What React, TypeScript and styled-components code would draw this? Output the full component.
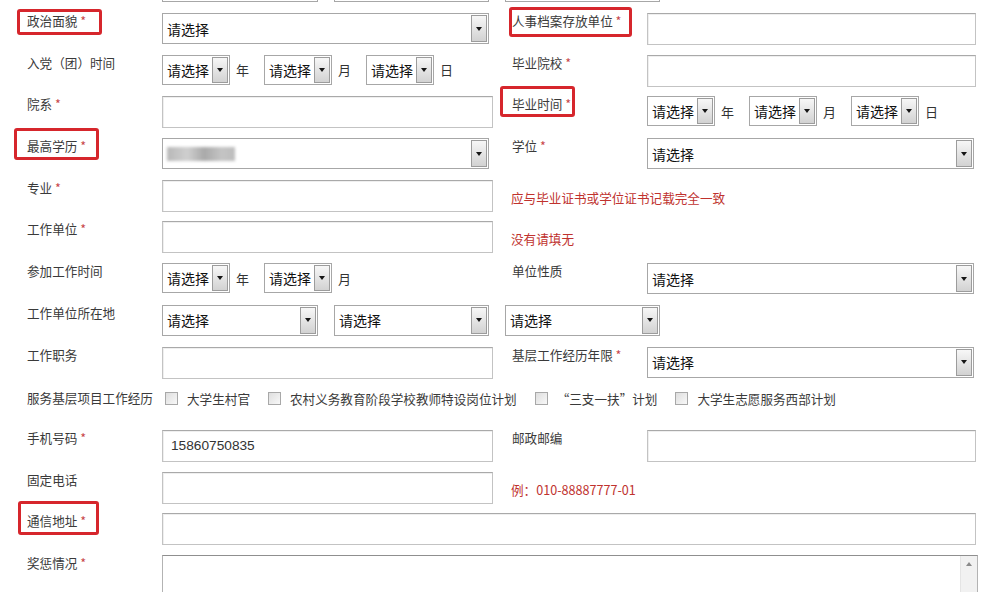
import React from 'react';
import styled, { createGlobalStyle } from 'styled-components';

type Box = [number, number, number, number];

const GlobalStyle = createGlobalStyle`
  html, body {
    margin: 0;
    background: #fff;
  }

  body {
    font-family: "Noto Sans CJK SC", "Microsoft YaHei", sans-serif;
    overflow: hidden;
  }
`;

const Select = ({ width, height = 31, children }: { width: number; height?: number; children?: React.ReactNode }) => (
  <SelectBox $w={width} $h={height}>
    <SelectText>{children ?? '请选择'}</SelectText>
    <Arrow />
  </SelectBox>
);

const DateGroup = ({ units }: { units: string[] }) => (
  <Inline>
    {units.map(unit => (
      <React.Fragment key={unit}>
        <Select width={68} height={30} />
        <Unit>{unit}</Unit>
      </React.Fragment>
    ))}
  </Inline>
);

const Check = ({ children }: { children: React.ReactNode }) => (
  <CheckItem>
    <CheckBox />
    <span>{children}</span>
  </CheckItem>
);

const App = () => {
  return (
    <>
      <GlobalStyle />
      <Form>
        {/* row above the fold: only the bottom edges of its selects show */}
        <Row>
          <Label />
          <Field $span={3}>
            <Inline $gap={16}>
              <Select width={156}>{''}</Select>
              <Select width={155}>{''}</Select>
              <Select width={155}>{''}</Select>
            </Inline>
          </Field>
        </Row>

        <Row>
          <Label>
            <Marked $box={[3, 16, 5, 10]}>政治面貌 <Star>*</Star></Marked>
          </Label>
          <Field><Select width={327} /></Field>
          <Label $right>
            <Marked $box={[5, 11, 7, 3]}>人事档案存放单位 <Star>*</Star></Marked>
          </Label>
          <Field><TextInput $w={329} readOnly /></Field>
        </Row>

        <Row>
          <Label>入党（团）时间</Label>
          <Field><DateGroup units={['年', '月', '日']} /></Field>
          <Label $right>毕业院校 <Star>*</Star></Label>
          <Field><TextInput $w={329} readOnly /></Field>
        </Row>

        <Row>
          <Label>院系 <Star>*</Star></Label>
          <Field><TextInput $w={331} readOnly /></Field>
          <Label $right>
            <Marked $box={[9, 4, 4, 12]}>毕业时间 <Star>*</Star></Marked>
          </Label>
          <Field><DateGroup units={['年', '月', '日']} /></Field>
        </Row>

        <Row>
          <Label>
            <Marked $box={[9, 13, 5, 13]}>最高学历 <Star>*</Star></Marked>
          </Label>
          <Field>
            <Select width={327}><Blurred /></Select>
          </Field>
          <Label $right>学位 <Star>*</Star></Label>
          <Field><Select width={327} /></Field>
        </Row>

        <Row>
          <Label>专业 <Star>*</Star></Label>
          <Field><TextInput $w={331} readOnly /></Field>
          <Hint>应与毕业证书或学位证书记载完全一致</Hint>
        </Row>

        <Row>
          <Label>工作单位 <Star>*</Star></Label>
          <Field><TextInput $w={331} readOnly /></Field>
          <Hint>没有请填无</Hint>
        </Row>

        <Row>
          <Label>参加工作时间</Label>
          <Field><DateGroup units={['年', '月']} /></Field>
          <Label $right>单位性质</Label>
          <Field><Select width={327} /></Field>
        </Row>

        <Row>
          <Label>工作单位所在地</Label>
          <Field $span={3}>
            <Inline $gap={16}>
              <Select width={156} />
              <Select width={155} />
              <Select width={155} />
            </Inline>
          </Field>
        </Row>

        <Row>
          <Label>工作职务</Label>
          <Field><TextInput $w={331} readOnly /></Field>
          <Label $right>基层工作经历年限 <Star>*</Star></Label>
          <Field><Select width={327} /></Field>
        </Row>

        <Row>
          <Label $top={2}>服务基层项目工作经历</Label>
          <Checks>
            <Check>大学生村官</Check>
            <Check>农村义务教育阶段学校教师特设岗位计划</Check>
            <Check>“三支一扶”计划</Check>
            <Check>大学生志愿服务西部计划</Check>
          </Checks>
        </Row>

        <Row>
          <Label>手机号码 <Star>*</Star></Label>
          <Field><TextInput $w={331} readOnly value="15860750835" /></Field>
          <Label $right>邮政邮编</Label>
          <Field><TextInput $w={329} readOnly /></Field>
        </Row>

        <Row>
          <Label>固定电话</Label>
          <Field><TextInput $w={331} readOnly /></Field>
          <Hint>例：010-88887777-01</Hint>
        </Row>

        <Row>
          <Label>
            <Marked $box={[11, 13, 5, 9]}>通信地址 <Star>*</Star></Marked>
          </Label>
          <Field $span={3}><TextInput $w={814} readOnly /></Field>
        </Row>

        <Row>
          <Label>奖惩情况 <Star>*</Star></Label>
          <Field $span={3}>
            <TextArea>
              <ScrollTrack>
                <ScrollUp />
              </ScrollTrack>
            </TextArea>
          </Field>
        </Row>
      </Form>
    </>
  );
};

const Form = styled.div`
  margin-top: -29.7px;
  width: 991px;
`;

const Row = styled.div`
  display: grid;
  grid-template-columns: 162px 338px 147px 344px;
  align-items: start;
  height: 41.7px;
`;

const Label = styled.div<{ $right?: boolean; $top?: number }>`
  padding-left: ${p => (p.$right ? 12 : 27)}px;
  padding-top: ${p => p.$top ?? 0}px;
  font-size: 12.6px;
  line-height: 18px;
  color: #3a3a3a;
  white-space: nowrap;
`;

const Star = styled.span`
  color: #c8464a;
`;

const Marked = styled.span<{ $box: Box }>`
  position: relative;
  display: inline-block;

  &::after {
    content: '';
    position: absolute;
    top: ${p => -p.$box[0]}px;
    right: ${p => -p.$box[1]}px;
    bottom: ${p => -p.$box[2]}px;
    left: ${p => -p.$box[3]}px;
    border: 3px solid #d6262c;
    border-radius: 3px;
  }
`;

const Field = styled.div<{ $span?: number }>`
  grid-column: span ${p => p.$span ?? 1};
  padding-top: 1px;
`;

const Inline = styled.div<{ $gap?: number }>`
  display: flex;
  align-items: center;
  gap: ${p => p.$gap ?? 0}px;
`;

const SelectBox = styled.div<{ $w: number; $h: number }>`
  display: flex;
  box-sizing: border-box;
  width: ${p => p.$w}px;
  height: ${p => p.$h}px;
  border: 1px solid #a7a7a7;
  background: #fff;
`;

const SelectText = styled.span`
  display: flex;
  align-items: center;
  flex: 1;
  padding-left: 4px;
  font-size: 14px;
  color: #111;
  white-space: nowrap;
  overflow: hidden;
`;

const Arrow = styled.span`
  display: flex;
  align-items: center;
  justify-content: center;
  box-sizing: border-box;
  width: 16px;
  margin: 1px;
  border: 1px solid #9c9c9c;
  background: linear-gradient(#f7f7f7, #d2d2d2);

  &::before {
    content: '';
    border-left: 3.5px solid transparent;
    border-right: 3.5px solid transparent;
    border-top: 4px solid #151515;
  }
`;

const Blurred = styled.span`
  display: block;
  width: 68px;
  height: 14px;
  background: linear-gradient(90deg, #b8b8b8, #cfcfcf 30%, #a9a9a9 55%, #c4c4c4 80%, #bdbdbd);
  filter: blur(1.5px);
`;

const Unit = styled.span`
  margin: 0 15px 0 6px;
  font-size: 13px;
  color: #333;
`;

const TextInput = styled.input<{ $w: number }>`
  display: block;
  box-sizing: border-box;
  width: ${p => p.$w}px;
  height: 32px;
  margin: 0;
  padding: 0 0 0 8px;
  border: 1px solid #c3c3c3;
  border-top-color: #a9a9a9;
  box-shadow: inset 1px 1px 0 #efefef;
  background: #fff;
  font-family: "Liberation Sans", Arial, sans-serif;
  font-size: 13.7px;
  color: #333;
  outline: none;
`;

const Hint = styled.div`
  grid-column: span 2;
  padding: 10px 0 0 11px;
  font-size: 12.6px;
  line-height: 18px;
  color: #c0322e;
  white-space: nowrap;
`;

const Checks = styled.div`
  grid-column: span 3;
  display: flex;
  align-items: center;
  height: 22px;
  font-size: 12.6px;
  color: #3a3a3a;
  white-space: nowrap;
`;

const CheckItem = styled.label`
  display: flex;
  align-items: center;
  gap: 9px;
  margin-right: 15px;
`;

const CheckBox = styled.span`
  box-sizing: border-box;
  width: 13px;
  height: 13px;
  margin-left: 3px;
  border: 1px solid #a8a8a8;
  background: linear-gradient(135deg, #dedede, #f8f8f8);
`;

const TextArea = styled.div`
  display: flex;
  justify-content: flex-end;
  box-sizing: border-box;
  width: 816px;
  height: 70px;
  border: 1px solid #b3b3b3;
  border-top-color: #8f8f8f;
  background: #fff;
`;

const ScrollTrack = styled.div`
  width: 16px;
  padding-top: 6px;
  border-left: 1px solid #e4e4e4;
  background: #f1f1f1;
  display: flex;
  justify-content: center;
  align-items: flex-start;
`;

const ScrollUp = styled.span`
  border-left: 3.5px solid transparent;
  border-right: 3.5px solid transparent;
  border-bottom: 4px solid #8a8a8a;
`;

export default App;
